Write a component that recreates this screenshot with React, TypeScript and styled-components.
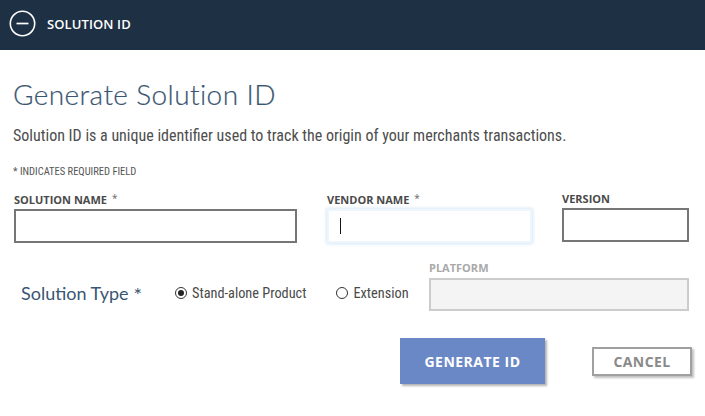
import React, { useState } from "react";
import styled, { createGlobalStyle } from "styled-components";

const GlobalStyle = createGlobalStyle`
  html, body {
    margin: 0;
    padding: 0;
    background: #ffffff;
  }
  body {
    font-family: "Open Sans", "Liberation Sans", sans-serif;
  }
`;

const Page = styled.div`
  width: 705px;
  height: 416px;
  overflow: hidden;
  background: #fff;
`;

const HeaderBar = styled.div`
  height: 50px;
  background: #1e3044;
  display: flex;
  align-items: center;
  padding: 0 0 3px 9px;
  box-sizing: border-box;
  gap: 11px;
`;

const HeaderTitle = styled.span`
  color: #fff;
  font-family: "Open Sans", "Liberation Sans", sans-serif;
  font-weight: 600;
  font-size: 13px;
  letter-spacing: 0.1px;
`;

const Body = styled.div`
  padding: 27px 13px 0 13px;
`;

const Title = styled.h1`
  margin: 0;
  font-family: "Lato", "Open Sans", sans-serif;
  font-weight: 300;
  font-size: 28px;
  line-height: 34px;
  color: #3a5673;
  letter-spacing: 0.4px;
  -webkit-text-stroke: 0.2px #3a5673;
`;

const Intro = styled.p`
  margin: 15px 0 0;
  font-family: "Roboto Condensed", "Roboto", sans-serif;
  font-stretch: 75%;
  font-size: 16px;
  line-height: 20px;
  color: #4d4d4d;
  white-space: nowrap;
`;

const Required = styled.div`
  margin-top: 19px;
  font-family: "Roboto Condensed", "Roboto", sans-serif;
  font-stretch: 75%;
  font-size: 10.5px;
  line-height: 13px;
  color: #555;
`;

const FieldRow = styled.div`
  display: grid;
  grid-template-columns: 283px 205px 127px;
  column-gap: 30px;
  margin-top: 14px;
  padding-left: 1px;
`;

const Field = styled.div`
  display: flex;
  flex-direction: column;
  gap: 3px;
`;

const Label = styled.label<{ $muted?: boolean }>`
  font-family: "Open Sans", "Liberation Sans", sans-serif;
  font-weight: 700;
  font-stretch: 95%;
  font-size: 11px;
  line-height: 13px;
  white-space: nowrap;
  color: ${(p) => (p.$muted ? "#a9a9a9" : "#4a4a4a")};
`;

const Star = styled.span`
  font-weight: 400;
  font-size: 10px;
  margin-left: 5px;
  vertical-align: 2px;
  color: #666;
`;

const Input = styled.input<{ $focused?: boolean; $disabled?: boolean; $h?: number }>`
  box-sizing: border-box;
  display: block;
  width: 100%;
  height: ${(p) => p.$h ?? 34}px;
  margin: 0;
  padding: 0 10px;
  font-size: 14px;
  outline: none;
  background: ${(p) => (p.$disabled ? "#f4f4f4" : "#fff")};
  border: 2px solid
    ${(p) => (p.$focused ? "#eef5fc" : p.$disabled ? "#cccccc" : "#767676")};
  box-shadow: ${(p) => (p.$focused ? "0 0 3px 1px #d6e7f6" : "none")};
`;

const CaretWrap = styled.div`
  position: relative;
`;

const Caret = styled.span`
  position: absolute;
  left: 13px;
  top: 9px;
  width: 1px;
  height: 16px;
  background: #111;
`;

const TypeRow = styled.div`
  display: grid;
  grid-template-columns: 162px 254px 260px;
  align-items: end;
  margin-top: 18px;
`;

const TypeLabel = styled.div`
  box-sizing: border-box;
  height: 33px;
  padding: 0 0 4px 8px;
  display: flex;
  align-items: center;
  font-family: "Lato", "Open Sans", sans-serif;
  font-size: 18px;
  color: #3a5673;
  white-space: nowrap;
`;

const TypeStar = styled.span`
  font-size: 20px;
  margin-left: 5px;
  margin-top: 2px;
`;

const RadioGroup = styled.div`
  display: flex;
  gap: 30px;
`;

const Radio = styled.label`
  box-sizing: border-box;
  display: flex;
  align-items: center;
  gap: 5px;
  height: 33px;
  padding-bottom: 3px;
  font-family: "Roboto Condensed", "Roboto", sans-serif;
  font-stretch: 75%;
  font-size: 14.3px;
  color: #4a4a4a;
  white-space: nowrap;
  cursor: pointer;
`;

const Dot = styled.span<{ $on?: boolean }>`
  box-sizing: border-box;
  width: 12px;
  height: 12px;
  border-radius: 50%;
  border: 1px solid #333;
  display: inline-flex;
  align-items: center;
  justify-content: center;
  &::after {
    content: "";
    width: 6px;
    height: 6px;
    border-radius: 50%;
    background: ${(p) => (p.$on ? "#222" : "transparent")};
  }
`;

const PlatformField = styled(Field)`
  gap: 4px;
`;

const Actions = styled.div`
  display: flex;
  justify-content: flex-end;
  align-items: center;
  gap: 47px;
  margin-top: 27px;
`;

const PrimaryButton = styled.button`
  width: 145px;
  height: 46px;
  padding: 0;
  border: none;
  background: #6b88c6;
  color: #fff;
  font-family: "Open Sans", "Liberation Sans", sans-serif;
  font-weight: 700;
  font-size: 14px;
  letter-spacing: 0.5px;
  box-shadow: 2px 2px 2px rgba(0, 0, 0, 0.3);
`;

const SecondaryButton = styled.button`
  width: 100px;
  height: 29px;
  margin-top: 1px;
  padding: 0;
  background: #fff;
  border: 2px solid #a0a0a0;
  color: #8a8a8a;
  font-family: "Open Sans", "Liberation Sans", sans-serif;
  font-weight: 700;
  font-size: 14px;
  letter-spacing: 0.4px;
  box-shadow: 2px 2px 2px rgba(0, 0, 0, 0.25);
`;

function MinusCircle() {
  return (
    <svg width="27" height="27" viewBox="0 0 27 27">
      <circle cx="13.5" cy="13.5" r="12.2" fill="none" stroke="#fff" strokeWidth="1.6" />
      <line x1="7.5" y1="13.5" x2="19.5" y2="13.5" stroke="#fff" strokeWidth="1.7" />
    </svg>
  );
}

export default function App() {
  const [type, setType] = useState("standalone");

  return (
    <Page>
      <GlobalStyle />
      <HeaderBar>
        <MinusCircle />
        <HeaderTitle>SOLUTION ID</HeaderTitle>
      </HeaderBar>
      <Body>
        <Title>Generate Solution ID</Title>
        <Intro>
          Solution ID is a unique identifier used to track the origin of your
          merchants transactions.
        </Intro>
        <Required>* INDICATES REQUIRED FIELD</Required>

        <FieldRow>
          <Field>
            <Label>
              SOLUTION NAME<Star>*</Star>
            </Label>
            <Input />
          </Field>
          <Field>
            <Label>
              VENDOR NAME<Star>*</Star>
            </Label>
            <CaretWrap>
              <Input $focused />
              <Caret />
            </CaretWrap>
          </Field>
          <Field>
            <Label>VERSION</Label>
            <Input />
          </Field>
        </FieldRow>

        <TypeRow>
          <TypeLabel>
            Solution Type<TypeStar>*</TypeStar>
          </TypeLabel>
          <RadioGroup>
            <Radio onClick={() => setType("standalone")}>
              <Dot $on={type === "standalone"} />
              Stand-alone Product
            </Radio>
            <Radio onClick={() => setType("extension")}>
              <Dot $on={type === "extension"} />
              Extension
            </Radio>
          </RadioGroup>
          <PlatformField>
            <Label $muted>PLATFORM</Label>
            <Input $disabled disabled $h={33} />
          </PlatformField>
        </TypeRow>

        <Actions>
          <PrimaryButton>GENERATE ID</PrimaryButton>
          <SecondaryButton>CANCEL</SecondaryButton>
        </Actions>
      </Body>
    </Page>
  );
}
